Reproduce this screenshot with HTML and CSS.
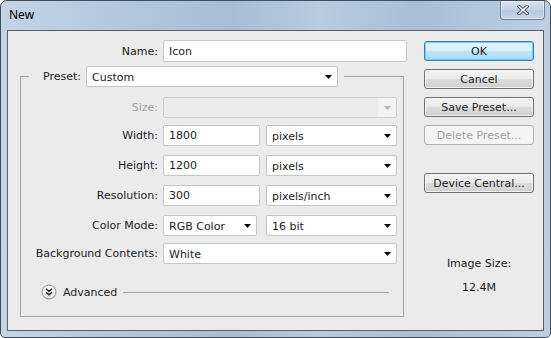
FILE: index.html
```html
<!DOCTYPE html>
<html lang="en">
<head>
    <meta charset="UTF-8">
    <title>New</title>
    <link rel="stylesheet" href="styles.css">
</head>
<body>
    <div class="window">
        <div class="titlebar">
            <span class="title">New</span>
            <div class="close">
                <svg width="12" height="10" viewBox="0 0 12 10">
                    <path d="M2 1.5 L10 8.5 M10 1.5 L2 8.5" stroke="#3b4756" stroke-width="3.4" stroke-linecap="square" fill="none"/>
                    <path d="M2 1.5 L10 8.5 M10 1.5 L2 8.5" stroke="#ffffff" stroke-width="1.6" stroke-linecap="square" fill="none"/>
                </svg>
            </div>
        </div>
        <div class="client">
            <div class="form">
                <div class="row name-row">
                    <label for="docName">Name:</label>
                    <input id="docName" class="field name-field" value="Icon">
                </div>

                <div class="group">
                    <div class="group-head">
                        <label>Preset:</label>
                        <div class="dropdown preset"><select><option>Custom</option></select></div>
                    </div>

                    <div class="row size-row">
                        <label class="disabled">Size:</label>
                        <div class="dropdown full disabled"><select disabled><option></option></select></div>
                    </div>
                    <div class="row gap-7">
                        <label>Width:</label>
                        <input class="field num" value="1800">
                        <div class="dropdown unit"><select><option>pixels</option></select></div>
                    </div>
                    <div class="row gap-9">
                        <label>Height:</label>
                        <input class="field num" value="1200">
                        <div class="dropdown unit"><select><option>pixels</option></select></div>
                    </div>
                    <div class="row gap-9">
                        <label>Resolution:</label>
                        <input class="field num" value="300">
                        <div class="dropdown unit"><select><option>pixels/inch</option></select></div>
                    </div>
                    <div class="row gap-9">
                        <label>Color Mode:</label>
                        <div class="dropdown mode"><select><option>RGB Color</option></select></div>
                        <div class="dropdown unit"><select><option>16 bit</option></select></div>
                    </div>
                    <div class="row gap-7">
                        <label>Background Contents:</label>
                        <div class="dropdown full"><select><option>White</option></select></div>
                    </div>

                    <div class="advanced">
                        <svg class="adv-icon" width="16" height="16" viewBox="0 0 16 16">
                            <defs>
                                <linearGradient id="advFill" x1="0" y1="0" x2="0" y2="1">
                                    <stop offset="0" stop-color="#ffffff"/>
                                    <stop offset="1" stop-color="#e2e2e2"/>
                                </linearGradient>
                            </defs>
                            <circle cx="8" cy="8" r="7" fill="url(#advFill)" stroke="#8c8c8c"/>
                            <path d="M5 4.8 L8 7.4 L11 4.8 M5 8.3 L8 10.9 L11 8.3" stroke="#1e1e1e" stroke-width="1.4" fill="none"/>
                        </svg>
                        <span>Advanced</span>
                        <div class="rule"></div>
                    </div>
                </div>
            </div>

            <div class="side">
                <button class="btn default">OK</button>
                <button class="btn">Cancel</button>
                <button class="btn">Save Preset...</button>
                <button class="btn" disabled>Delete Preset...</button>
                <button class="btn device">Device Central...</button>
                <div class="size-title">Image Size:</div>
                <div class="size-value">12.4M</div>
            </div>
        </div>
    </div>
</body>
</html>
```

FILE: styles.css
```css
body {
    margin: 0;
    background-color: #ffffff;
    font-family: "DejaVu Sans", sans-serif;
    font-size: 11px;
    color: #1c1c26;
}

.window {
    width: 551px;
    height: 338px;
    box-sizing: border-box;
    border: 1px solid #434c57;
    border-radius: 7px 7px 5px 5px;
    background: linear-gradient(90deg, #c3d4e6 0%, #b6c9de 18%, #a8bdd4 42%, #b8cbdf 58%, #a9bed5 76%, #bccfe3 100%);
    display: flex;
    flex-direction: column;
    overflow: hidden;
}

.titlebar {
    height: 29px;
    display: flex;
    justify-content: space-between;
    align-items: flex-start;
    flex-shrink: 0;
}

.title {
    font-family: "Noto Sans", sans-serif;
    font-size: 12px;
    line-height: 16px;
    color: #000000;
    margin: 6px 0 0 8px;
}

.close {
    width: 45px;
    height: 19px;
    box-sizing: border-box;
    margin-right: 5px;
    border: 1px solid #6f8196;
    border-top: none;
    border-radius: 0 0 4px 4px;
    background: linear-gradient(#d6e2ee, #c3d3e4 50%, #b4c7dc 51%, #c6d6e7);
    box-shadow: inset 0 0 0 1px rgba(255, 255, 255, 0.45);
    display: flex;
    align-items: center;
    justify-content: center;
}

.client {
    flex: 1;
    margin: 0 6px 6px;
    border: 1px solid #56616e;
    background-color: #ebebeb;
    display: flex;
}

.form {
    width: 399px;
}

.row {
    display: flex;
    align-items: center;
    height: 21px;
}

.row label {
    width: 137px;
    margin-right: 5px;
    text-align: right;
    white-space: nowrap;
}

.name-row {
    margin-top: 9px;
    height: 22px;
}

.name-row label {
    width: 150px;
}

.disabled {
    color: #a3a3a3;
}

.field {
    appearance: none;
    box-sizing: border-box;
    height: 21px;
    border: 1px solid #c6c6c6;
    border-radius: 2px;
    background-color: #ffffff;
    padding: 0 5px;
    font: inherit;
    color: #1c1c26;
    outline: none;
}

.name-field {
    width: 244px;
    height: 22px;
}

.num {
    width: 97px;
    margin-right: 6px;
}

.dropdown {
    position: relative;
    height: 21px;
}

.dropdown select {
    appearance: none;
    width: 100%;
    height: 21px;
    box-sizing: border-box;
    border: 1px solid #c6c6c6;
    border-radius: 2px;
    background-color: #ffffff;
    padding: 1px 20px 0 5px;
    font: inherit;
    color: #1c1c26;
    outline: none;
}

.dropdown::after {
    content: "";
    position: absolute;
    right: 6px;
    top: 9px;
    width: 7px;
    height: 4px;
    background-color: #000000;
    clip-path: polygon(0 0, 100% 0, 50% 100%);
}

.dropdown.disabled select {
    background: linear-gradient(90deg, #ebebeb 0, #ebebeb calc(100% - 18px), #f6f6f6 calc(100% - 18px));
    border-color: #c2c2c2;
}

.dropdown.disabled::after {
    background-color: #b4b4b4;
}

.preset {
    width: 252px;
}

.full {
    width: 234px;
}

.unit {
    width: 131px;
}

.mode {
    width: 94px;
    margin-right: 9px;
}

.group {
    margin: 14px 0 0 12px;
    width: 382px;
    border: 1px solid #a4a4a4;
    padding-bottom: 16px;
}

.group-head {
    display: flex;
    align-items: center;
    width: fit-content;
    margin: -11px 0 0 8px;
    padding: 0 6px 0 14px;
    background-color: #ebebeb;
}

.group-head label {
    margin-right: 5px;
}

.size-row {
    margin-top: 10px;
}

.gap-7 {
    margin-top: 7px;
}

.gap-9 {
    margin-top: 9px;
}

.advanced {
    display: flex;
    align-items: center;
    height: 16px;
    margin-top: 20px;
    padding-left: 20px;
}

.adv-icon {
    margin-right: 6px;
}

.rule {
    width: 266px;
    height: 1px;
    margin-left: 6px;
    background-color: #a4a4a4;
}

.side {
    width: 110px;
    margin-left: auto;
    margin-right: 9px;
    padding-top: 10px;
    display: flex;
    flex-direction: column;
    align-items: center;
}

.btn {
    width: 110px;
    height: 20px;
    margin-bottom: 8px;
    border: 1px solid #707070;
    border-radius: 3px;
    background: linear-gradient(#f2f2f2 0%, #ebebeb 50%, #dddddd 50%, #cfcfcf 100%);
    box-shadow: inset 0 0 0 1px rgba(255, 255, 255, 0.7);
    font: inherit;
    color: #1c1c26;
    padding: 0;
    cursor: pointer;
}

.btn.default {
    border-color: #3c7fb1;
    background: linear-gradient(#e5f4fc 0%, #d9effc 50%, #bee6fd 50%, #a7d9f5 100%);
    box-shadow: inset 0 0 0 1px #6fd0f5;
}

.btn:disabled {
    border-color: #adb2b5;
    background: #f4f4f4;
    box-shadow: none;
    color: #a3a3a3;
    cursor: default;
}

.btn.device {
    margin-top: 20px;
}

.size-title {
    margin-top: 56px;
    line-height: 13px;
}

.size-value {
    margin-top: 11px;
    line-height: 13px;
}
```
